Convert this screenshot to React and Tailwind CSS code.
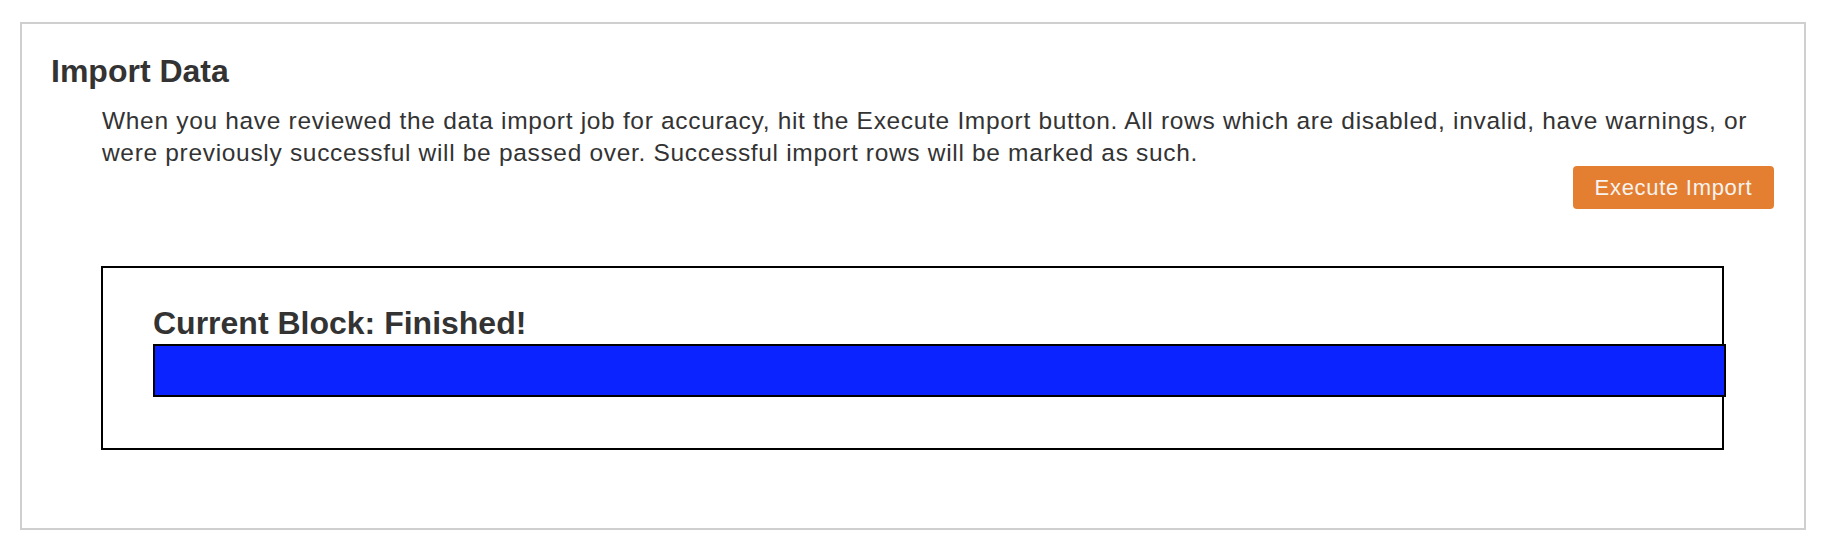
import React from 'react';

const App = () => {
  return (
    <div className="min-h-[558px] bg-white pt-[22px] pl-[20px] pr-[24px] text-[#333333] font-['Liberation_Sans',Arial,sans-serif]">
      <div className="border-2 border-[#cfcfcf] pt-[30px] pl-[29px] pr-[30px] pb-[78px]">
        {/* Header */}
        <h3 className="text-[32px] leading-[35px] font-bold">Import Data</h3>
        <p className="mt-[16px] ml-[51px] text-[24.5px] leading-[32px] tracking-[0.68px]">
          When you have reviewed the data import job for accuracy, hit the Execute Import button. All rows which are disabled, invalid, have warnings, or were previously successful will be passed over. Successful import rows will be marked as such.
        </p>
        <div className="flex justify-end -mt-[3px]">
          <button className="w-[201px] h-[43px] rounded-[4px] bg-[#e47f32] text-[#f7f3ef] text-[22px] tracking-[0.7px] leading-none">
            Execute Import
          </button>
        </div>

        {/* Progress block */}
        <div className="mt-[57px] mx-[50px] border-2 border-black pt-[38px] pl-[50px] pb-[51px]">
          <h3 className="text-[32px] leading-[35px] font-bold">Current Block: Finished!</h3>
          <div className="mt-[3px] w-[1573px] h-[53px] border-2 border-black bg-[#0b24ff]"></div>
        </div>
      </div>
    </div>
  );
};

export default App;
